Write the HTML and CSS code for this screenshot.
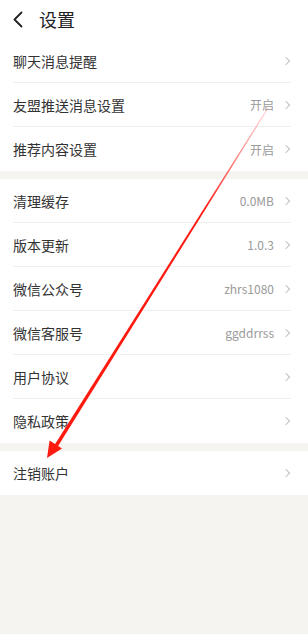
FILE: index.html
```html
<!DOCTYPE html>
<html lang="zh-CN">
<head>
    <meta charset="UTF-8">
    <meta name="viewport" content="width=device-width, initial-scale=1.0">
    <title>设置</title>
    <link rel="stylesheet" href="styles.css">
</head>
<body>
    <header class="top-bar">
        <svg class="back-icon" width="11" height="17" viewBox="0 0 11 17">
            <path d="M9.5 1.5 L2.5 8.5 L9.5 15.5" fill="none" stroke="#222" stroke-width="1.8" stroke-linecap="round" stroke-linejoin="round"/>
        </svg>
        <h1>设置</h1>
    </header>

    <main>
        <section class="group">
            <div class="item"><span class="label">聊天消息提醒</span><span class="arrow"></span></div>
            <div class="item"><span class="label">友盟推送消息设置</span><span class="value">开启</span><span class="arrow"></span></div>
            <div class="item"><span class="label">推荐内容设置</span><span class="value">开启</span><span class="arrow"></span></div>
        </section>

        <section class="group">
            <div class="item"><span class="label">清理缓存</span><span class="value">0.0MB</span><span class="arrow"></span></div>
            <div class="item"><span class="label">版本更新</span><span class="value">1.0.3</span><span class="arrow"></span></div>
            <div class="item"><span class="label">微信公众号</span><span class="value">zhrs1080</span><span class="arrow"></span></div>
            <div class="item"><span class="label">微信客服号</span><span class="value">ggddrrss</span><span class="arrow"></span></div>
            <div class="item"><span class="label">用户协议</span><span class="arrow"></span></div>
            <div class="item"><span class="label">隐私政策</span><span class="arrow"></span></div>
        </section>

        <section class="group">
            <div class="item"><span class="label">注销账户</span><span class="arrow"></span></div>
        </section>
    </main>

    <!-- 标注箭头 -->
    <svg class="annotation" width="308" height="634" viewBox="0 0 308 634">
        <defs>
            <linearGradient id="arrowFade" gradientUnits="userSpaceOnUse" x1="268" y1="108" x2="205" y2="208">
                <stop offset="0" stop-color="#ff7a7a" stop-opacity="0.35"/>
                <stop offset="1" stop-color="#ff1a10" stop-opacity="1"/>
            </linearGradient>
        </defs>
        <polygon points="268.4,108.3 267.6,107.7 54.5,445.1 57.5,447" fill="url(#arrowFade)"/>
        <polygon points="47,458 49.6,440.6 62,448.4" fill="#ff1a10"/>
    </svg>
</body>
</html>
```

FILE: styles.css
```css
/* Reset básico */
* {
    margin: 0;
    padding: 0;
    box-sizing: border-box;
}

body {
    font-family: "Noto Sans CJK SC", "Noto Sans", sans-serif;
    background: #f5f4f0;
    color: #333;
    width: 308px;
    min-height: 634px;
    position: relative;
}

.top-bar {
    height: 39px;
    background: #fff;
    display: flex;
    align-items: center;
    padding-left: 12px;
}

.back-icon {
    display: block;
}

.top-bar h1 {
    font-size: 18px;
    font-weight: normal;
    color: #222;
    margin-left: 16px;
    line-height: 1;
    margin-top: -1px;
}

.group {
    background: #fff;
    margin-bottom: 8px;
}

.item {
    height: 44px;
    margin: 0 17px 0 13px;
    display: flex;
    align-items: center;
    border-bottom: 1px solid #efefef;
}

.item:last-child {
    border-bottom: none;
}

.label {
    flex: 1;
    font-size: 14px;
    color: #333;
}

.value {
    font-size: 12px;
    color: #9a9a9a;
    margin-right: 9px;
}

.arrow {
    width: 6px;
    height: 6px;
    border-top: 1px solid #c4c4c4;
    border-right: 1px solid #c4c4c4;
    transform: rotate(45deg);
    margin-right: 2px;
}

.annotation {
    position: absolute;
    top: 0;
    left: 0;
    pointer-events: none;
}
```
